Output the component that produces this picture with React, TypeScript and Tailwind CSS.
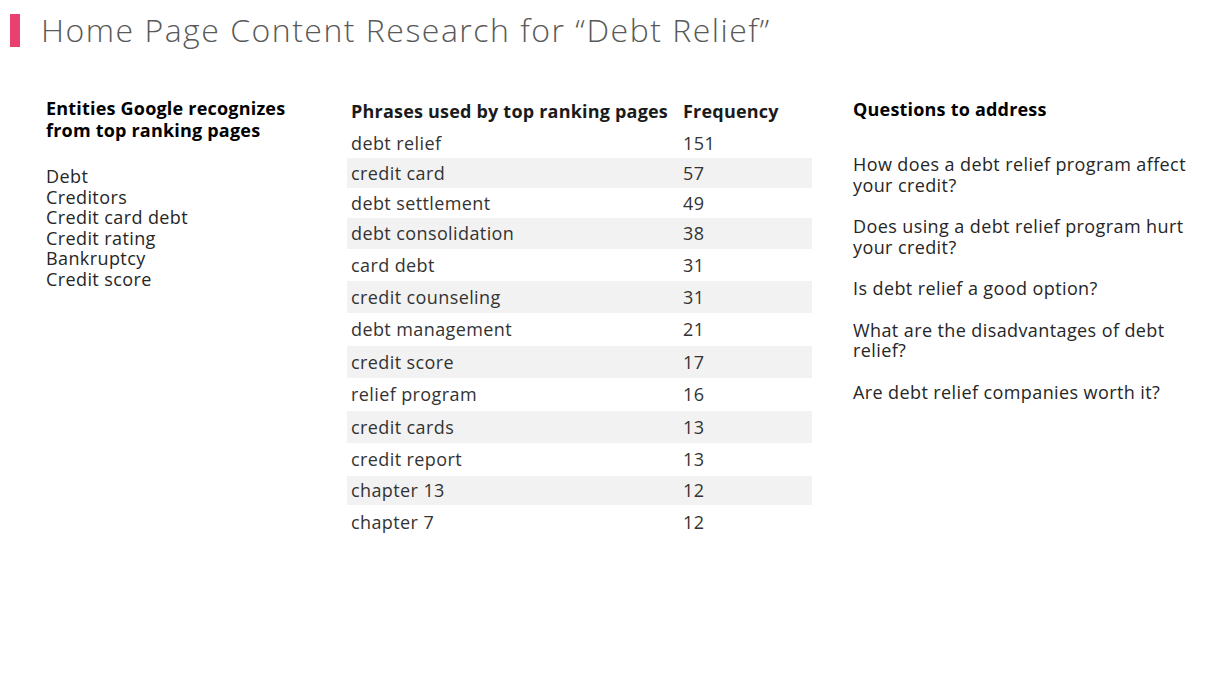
const entities = ['Debt', 'Creditors', 'Credit card debt', 'Credit rating', 'Bankruptcy', 'Credit score'];

type Row = { phrase: string; freq: number; cls: string };

const rows: Row[] = [
  { phrase: 'debt relief', freq: 151, cls: 'h-[30px]' },
  { phrase: 'credit card', freq: 57, cls: 'h-[30px] bg-[#f2f2f2]' },
  { phrase: 'debt settlement', freq: 49, cls: 'h-[30px]' },
  { phrase: 'debt consolidation', freq: 38, cls: 'h-[31px] bg-[#f2f2f2]' },
  { phrase: 'card debt', freq: 31, cls: 'h-[32px]' },
  { phrase: 'credit counseling', freq: 31, cls: 'h-[32px] bg-[#f2f2f2]' },
  { phrase: 'debt management', freq: 21, cls: 'h-[33px]' },
  { phrase: 'credit score', freq: 17, cls: 'h-[32px] bg-[#f2f2f2]' },
  { phrase: 'relief program', freq: 16, cls: 'h-[33px]' },
  { phrase: 'credit cards', freq: 13, cls: 'h-[32px] bg-[#f2f2f2]' },
  { phrase: 'credit report', freq: 13, cls: 'h-[33px]' },
  { phrase: 'chapter 13', freq: 12, cls: 'h-[29px] bg-[#f2f2f2]' },
  { phrase: 'chapter 7', freq: 12, cls: 'h-[35px]' },
];

const questions = [
  'How does a debt relief program affect your credit?',
  'Does using a debt relief program hurt your credit?',
  'Is debt relief a good option?',
  'What are the disadvantages of debt relief?',
  'Are debt relief companies worth it?',
];

export default function App() {
  return (
    <div className="w-[1227px] h-[681px] bg-white overflow-hidden font-['Open_Sans',sans-serif] text-[#262626]">
      {/* Title */}
      <div className="flex items-center pl-[10px] pt-[13px]">
        <div className="w-[10px] h-[33px] bg-[#e8416f]" />
        <h1 className="ml-[21px] text-[32px] leading-[34px] tracking-[1.5px] text-[#595959] font-light">
          Home Page Content Research for “Debt Relief”
        </h1>
      </div>

      <div className="flex mt-[47px]">
        {/* Entities */}
        <div className="w-[347px] pl-[46px]">
          <h2 className="mt-[3px] text-[18px] leading-[22px] tracking-[0.2px] font-bold text-black w-[270px]">
            Entities Google recognizes from top ranking pages
          </h2>
          <ul className="mt-[25px] text-[18px] leading-[20.6px] tracking-[0.4px]">
            {entities.map((e) => (
              <li key={e}>{e}</li>
            ))}
          </ul>
        </div>

        {/* Phrases table */}
        <div className="w-[465px]">
          <div className="flex items-center h-[34px] text-[18px] font-bold tracking-[0.2px] text-[#1a1a1a]">
            <div className="w-[332px] pl-[4px]">Phrases used by top ranking pages</div>
            <div className="pl-[4px]">Frequency</div>
          </div>
          {rows.map((r) => (
            <div key={r.phrase} className={`flex items-center text-[18px] tracking-[0.4px] text-[#333] ${r.cls}`}>
              <div className="w-[332px] pl-[4px]">{r.phrase}</div>
              <div className="pl-[4px]">{r.freq}</div>
            </div>
          ))}
        </div>

        {/* Questions */}
        <div className="ml-[41px] w-[345px]">
          <h2 className="h-[30px] flex items-center text-[18px] font-bold tracking-[0.2px] text-black">Questions to address</h2>
          <div className="mt-[30px] text-[18px] leading-[20.7px] tracking-[0.4px] space-y-[20.7px]">
            {questions.map((q) => (
              <p key={q}>{q}</p>
            ))}
          </div>
        </div>
      </div>
    </div>
  );
}
